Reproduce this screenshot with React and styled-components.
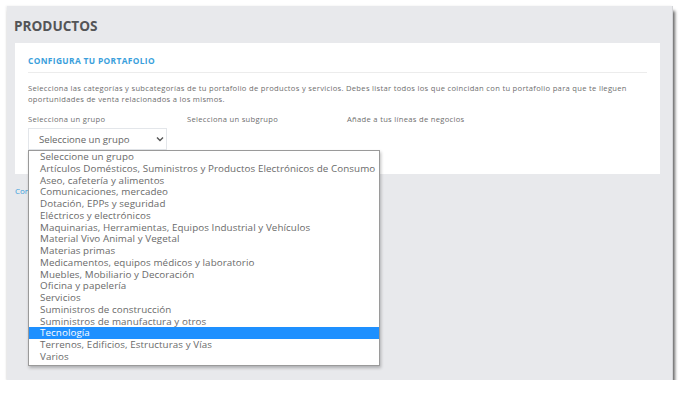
import React from 'react';
import styled, { createGlobalStyle } from 'styled-components';

const GlobalStyle = createGlobalStyle`
    body {
        margin: 0;
        background: #ffffff;
        font-family: "Open Sans", "Liberation Sans", sans-serif;
    }
`

const Window = styled.div`
    margin: 6px 0 0 7px;
    width: 666px;
    height: 374px;
    box-sizing: border-box;
    background: #e8e9ec;
    border-right: 1px solid #d4d5d8;
    box-shadow: 2px 5px 3px rgba(0, 0, 0, 0.6), -1px 0 2px rgba(0, 0, 0, 0.08);
    padding: 10px 12px 0 7px;
`

const Title = styled.h1`
    margin: 0;
    font-size: 13.6px;
    font-weight: 700;
    color: #545557;
    line-height: 20px;
`

const Card = styled.section`
    margin-top: 7px;
    margin-left: 1px;
    width: 645px;
    height: 131px;
    box-sizing: border-box;
    background: #ffffff;
    padding: 12px 13px 0 13px;
`

const CardTitle = styled.h2`
    margin: 0;
    padding-bottom: 6px;
    border-bottom: 1px solid #ececec;
    font-size: 8.4px;
    font-weight: 700;
    color: #3b9fdc;
    letter-spacing: 0.35px;
    line-height: 11px;
`

const Description = styled.p`
    margin: 10px 0 0 0;
    font-size: 7.6px;
    letter-spacing: 0.3px;
    line-height: 11px;
    color: #6e6e6e;
`

const Fields = styled.div`
    display: flex;
    margin-top: 9px;
`

const Field = styled.div`
    position: relative;
    width: ${p => p.width}px;
`

const Label = styled.div`
    font-size: 7.6px;
    letter-spacing: 0.3px;
    line-height: 11px;
    color: #6e6e6e;
`

const Select = styled.div`
    display: flex;
    align-items: center;
    justify-content: space-between;
    margin-top: 3px;
    width: 139px;
    height: 22px;
    box-sizing: border-box;
    border: 1px solid #e3e6ea;
    padding: 0 2px 0 10px;
    font-size: 9.6px;
    color: #666666;
`

const Options = styled.ul`
    position: absolute;
    left: 0;
    top: 36px;
    width: 350px;
    margin: 0;
    padding: 0 0 2px 0;
    list-style: none;
    background: #ffffff;
    border: 1px solid #9a9a9a;
    box-shadow: 1px 2px 3px rgba(0, 0, 0, 0.25);
    z-index: 2;
`

const Option = styled.li`
    padding-left: 11px;
    font-size: 9.8px;
    letter-spacing: 0.08px;
    line-height: 11.75px;
    height: 11.75px;
    white-space: nowrap;
    color: ${p => p.active ? '#ffffff' : '#6a6a6a'};
    background: ${p => p.active ? '#1e90ff' : 'transparent'};
`

const Link = styled.a`
    display: block;
    margin-top: 11px;
    margin-left: 1px;
    font-size: 8px;
    color: #3b9fdc;
`

const groups = [
    'Seleccione un grupo',
    'Artículos Domésticos, Suministros y Productos Electrónicos de Consumo',
    'Aseo, cafetería y alimentos',
    'Comunicaciones, mercadeo',
    'Dotación, EPPs y seguridad',
    'Eléctricos y electrónicos',
    'Maquinarias, Herramientas, Equipos Industrial y Vehículos',
    'Material Vivo Animal y Vegetal',
    'Materias primas',
    'Medicamentos, equipos médicos y laboratorio',
    'Muebles, Mobiliario y Decoración',
    'Oficina y papelería',
    'Servicios',
    'Suministros de construcción',
    'Suministros de manufactura y otros',
    'Tecnología',
    'Terrenos, Edificios, Estructuras y Vías',
    'Varios'
]

const Chevron = () => (
    <svg width="8" height="6" viewBox="0 0 8 6">
        <path d="M1 1.5 L4 4.5 L7 1.5" fill="none" stroke="#555" strokeWidth="1.4" />
    </svg>
)

export default function App() {
    return (
        <>
            <GlobalStyle />
            <Window>
                <Title>PRODUCTOS</Title>
                <Card>
                    <CardTitle>CONFIGURA TU PORTAFOLIO</CardTitle>
                    <Description>
                        Selecciona las categorías y subcategorías de tu portafolio de productos y servicios. Debes listar todos los que coincidan con tu portafolio para que te lleguen oportunidades de venta relacionados a los mismos.
                    </Description>
                    <Fields>
                        <Field width={159}>
                            <Label>Selecciona un grupo</Label>
                            <Select>
                                Seleccione un grupo
                                <Chevron />
                            </Select>
                            <Options>
                                {groups.map(g => (
                                    <Option key={g} active={g === 'Tecnología'}>{g}</Option>
                                ))}
                            </Options>
                        </Field>
                        <Field width={160}>
                            <Label>Selecciona un subgrupo</Label>
                        </Field>
                        <Field width={200}>
                            <Label>Añade a tus líneas de negocios</Label>
                        </Field>
                    </Fields>
                </Card>
                <Link>Continuar</Link>
            </Window>
        </>
    );
}
